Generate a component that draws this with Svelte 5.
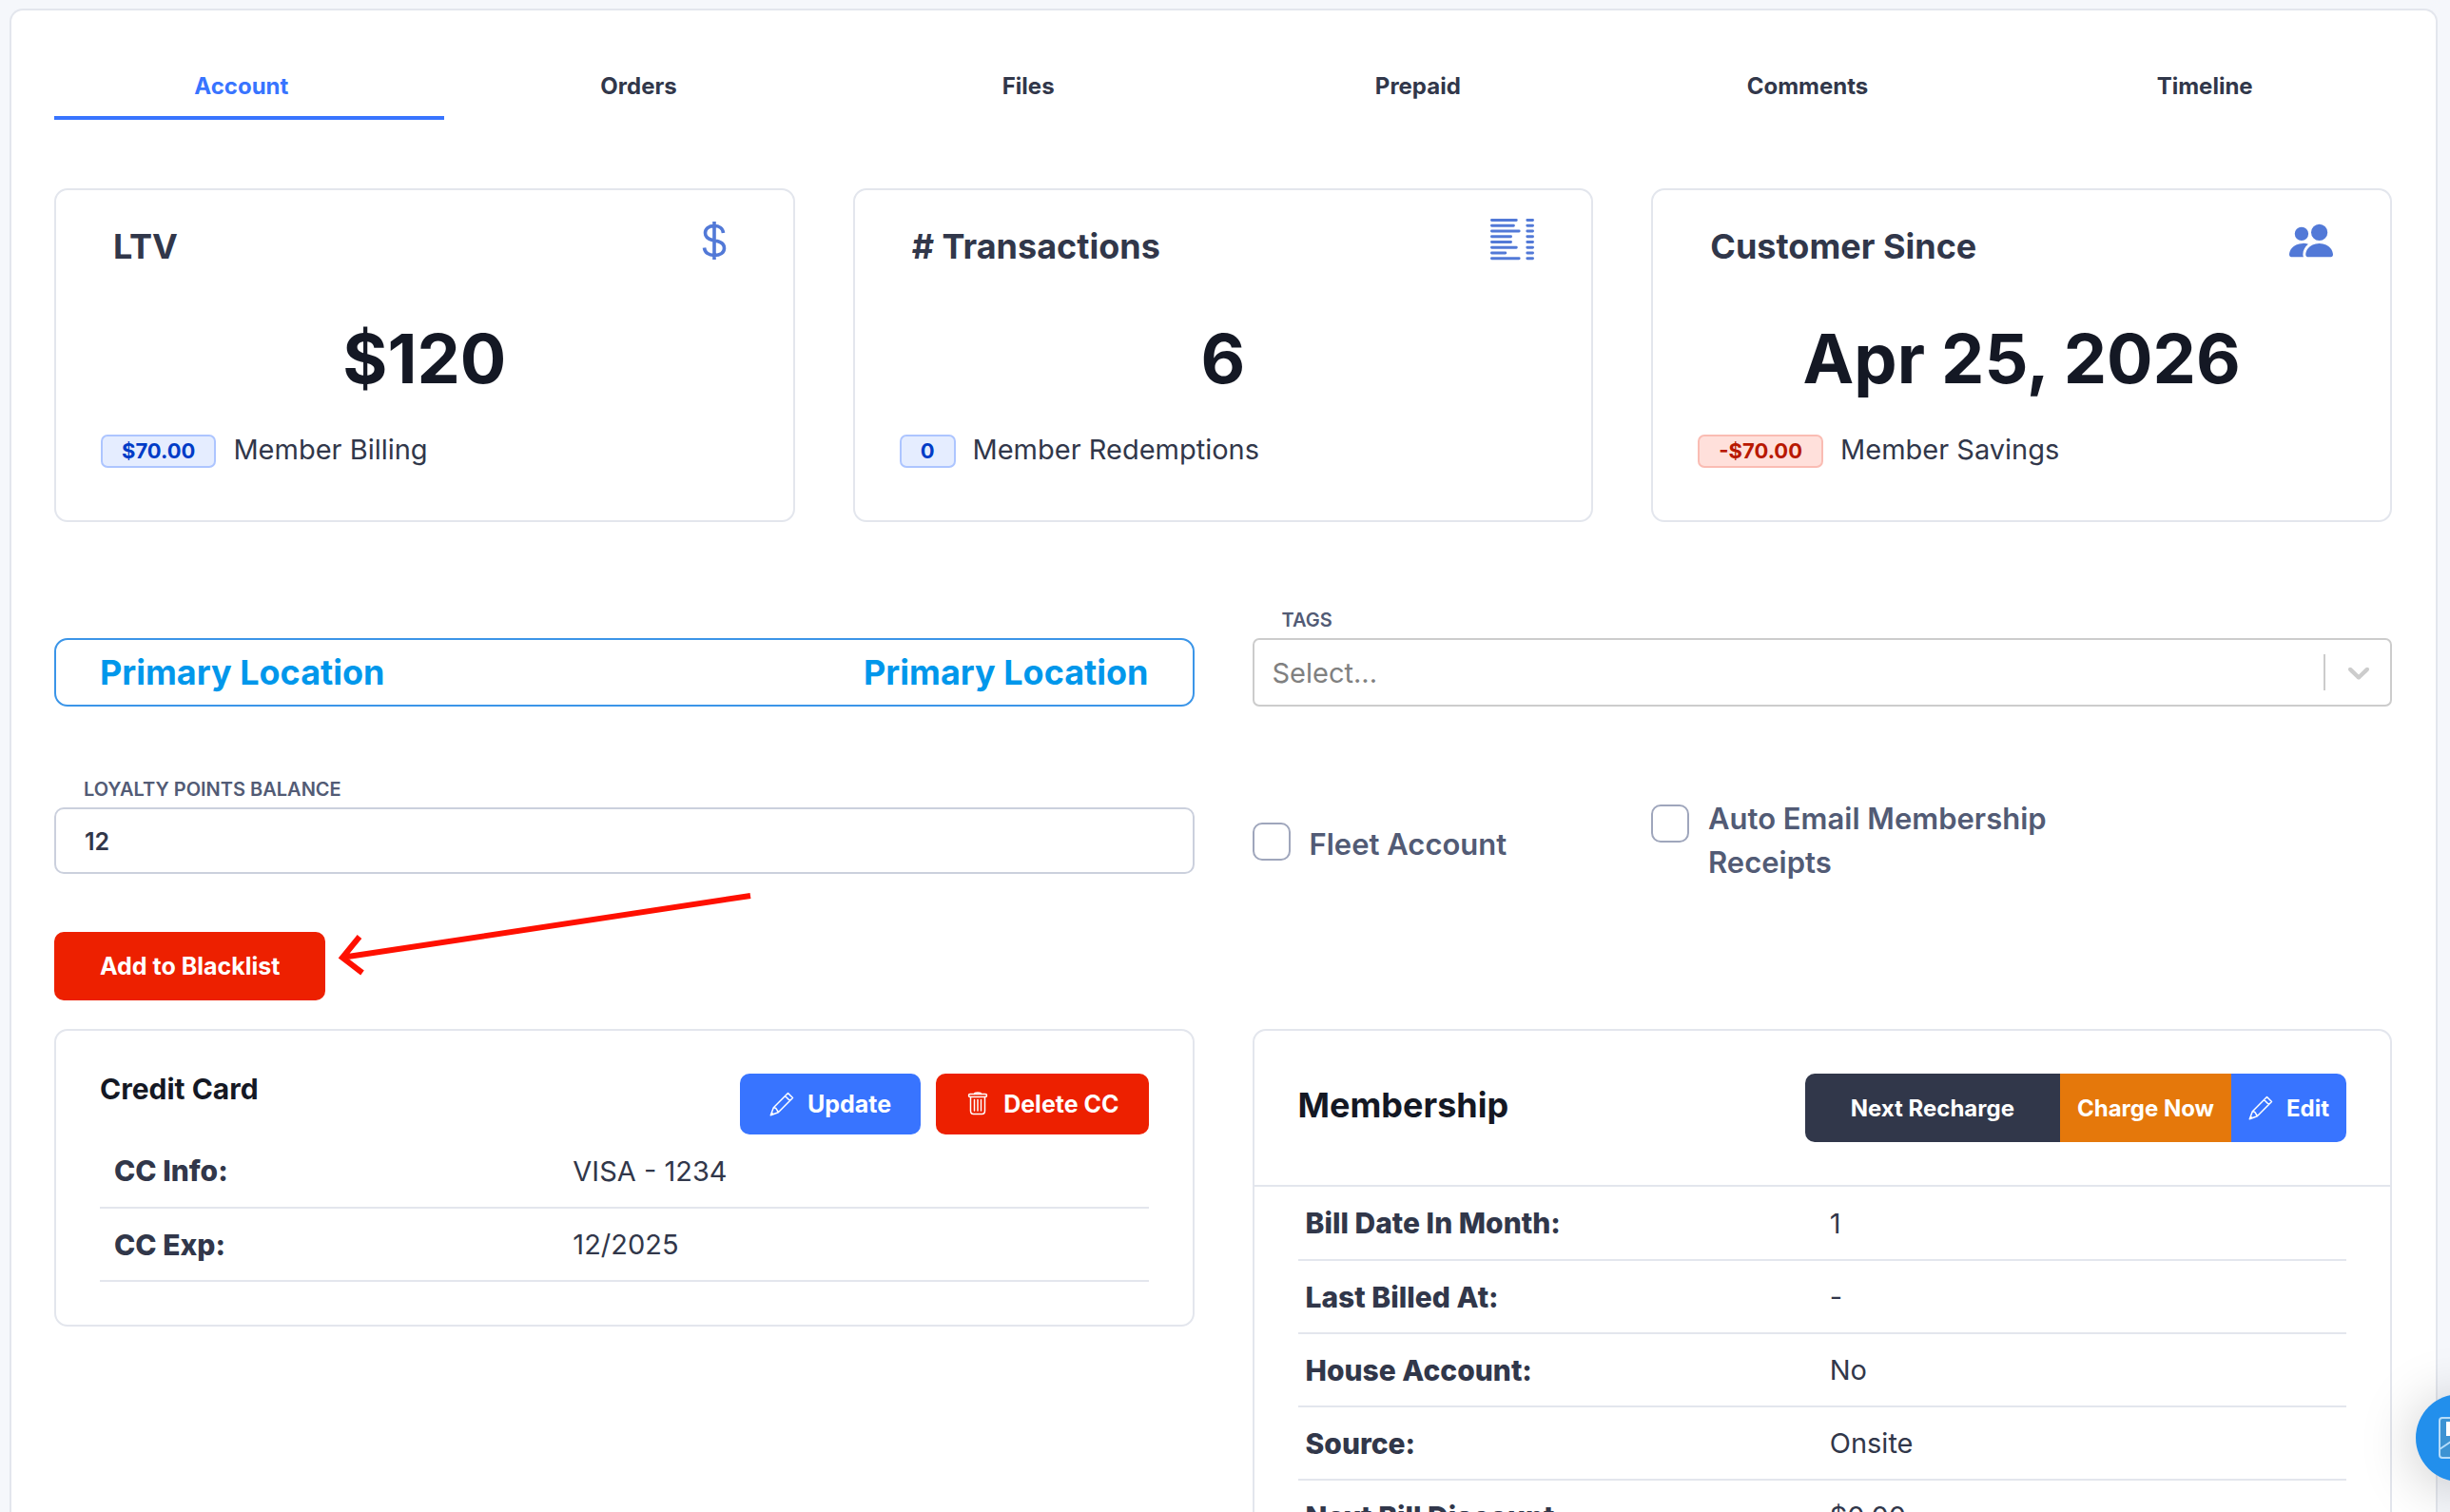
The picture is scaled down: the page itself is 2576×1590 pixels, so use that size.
<script>
  const tabs = ['Account', 'Orders', 'Files', 'Prepaid', 'Comments', 'Timeline'];
  let active = $state('Account');

  const stats = [
    { title: 'LTV', value: '$120', badge: '$70.00', note: 'Member Billing', icon: 'dollar' },
    { title: '# Transactions', value: '6', badge: '0', note: 'Member Redemptions', icon: 'list' },
    { title: 'Customer Since', value: 'Apr 25, 2026', badge: '-$70.00', note: 'Member Savings', icon: 'people', danger: true }
  ];

  const receiptRows = [10, 9, 11, 8, 8, 10, 6, 11];

  const card = [
    ['CC Info:', 'VISA - 1234'],
    ['CC Exp:', '12/2025']
  ];

  const membership = [
    ['Bill Date In Month:', '1'],
    ['Last Billed At:', '-'],
    ['House Account:', 'No'],
    ['Source:', 'Onsite'],
    ['Next Bill Discount:', '$0.00']
  ];

  let points = $state('12');
</script>

{#snippet pencil()}
  <svg class="btn-icon" viewBox="0 0 26 26" aria-hidden="true">
    <path d="M19.5 1.5 24.5 6.500 9.300 21.700 1.300 24.700 4.300 16.700ZM16.500 4.500l5 5M4.300 16.700l2.400.6 1.200 1.900 1.400 2.500M2.300 22l1.700 1.700" />
  </svg>
{/snippet}

<div class="page">
  <main class="panel">
    <nav class="tabs" aria-label="Customer sections">
      {#each tabs as tab}
        <button class="tab" class:active={active === tab} onclick={() => (active = tab)}>{tab}</button>
      {/each}
    </nav>

    <section class="stats">
      {#each stats as s}
        <article class="card stat">
          <header class="stat-head">
            <h2>{s.title}</h2>
            {#if s.icon === 'dollar'}
              <svg class="stat-icon" viewBox="0 0 46 46" aria-hidden="true">
                <path d="M23 3v40M32.500 15c-.5-5-4.500-7.500-9.500-7.500-6 0-9.500 3-9.500 7.500 0 4.400 3 6.300 7.500 7.500l5 1.100c5 1.200 7.500 3.300 7.500 7.400 0 5-4.500 7.500-10.500 7.500-6 0-10-3-10.500-8" fill="none" stroke="currentColor" stroke-width="3.600" />
              </svg>
            {:else if s.icon === 'list'}
              <svg class="stat-icon" viewBox="0 0 16 16" aria-hidden="true">
                {#each receiptRows as w, i}
                  <path d="M.5 {0.500 + i * 2}h{w - 1}M13.500 {0.500 + i * 2}h2" stroke="currentColor" stroke-width="1" stroke-linecap="round" />
                {/each}
              </svg>
            {:else}
              <svg class="stat-icon" viewBox="0 0 16 16" aria-hidden="true">
                <path d="M7 14s-1 0-1-1 1-4 5-4 5 3 5 4-1 1-1 1H7zm4-6a3 3 0 1 0 0-6 3 3 0 0 0 0 6zM5.216 14A2.238 2.238 0 0 1 5 13c0-1.355.68-2.750 1.936-3.720A6.325 6.325 0 0 0 5 9c-4 0-5 3-5 4s1 1 1 1h4.216zM4.500 8a2.500 2.500 0 1 0 0-5 2.500 2.500 0 0 0 0 5z" fill="currentColor" />
              </svg>
            {/if}
          </header>
          <p class="value">{s.value}</p>
          <p class="note"><span class="badge" class:danger={s.danger}>{s.badge}</span>{s.note}</p>
        </article>
      {/each}
    </section>

    <section class="row location-row">
      <div class="location"><span>Primary Location</span><span>Primary Location</span></div>
      <div class="field">
        <label for="tags">Tags</label>
        <div class="select">
          <select id="tags"><option>Select...</option></select>
          <svg viewBox="0 0 20 20" aria-hidden="true">
            <path d="M4.516 7.548c0.436-0.446 1.043-0.481 1.576 0l3.908 3.747 3.908-3.747c0.533-0.481 1.141-0.446 1.574 0 0.436 0.445 0.408 1.197 0 1.615-0.406 0.418-4.695 4.502-4.695 4.502-0.217 0.223-0.502 0.335-0.787 0.335s-0.570-0.112-0.789-0.335c0 0-4.287-4.084-4.695-4.502s-0.436-1.170 0-1.615z" />
          </svg>
        </div>
      </div>
    </section>

    <section class="row points-row">
      <div class="field">
        <label for="points">Loyalty Points Balance</label>
        <input id="points" class="text" type="text" bind:value={points} />
      </div>
      <div class="checks">
        <label class="check low"><input type="checkbox" /><span>Fleet Account</span></label>
        <label class="check high"><input type="checkbox" /><span>Auto Email Membership Receipts</span></label>
      </div>
    </section>

    <div class="blacklist">
      <button class="btn red tall">Add to Blacklist</button>
      <svg class="arrow" viewBox="0 0 440 96" aria-hidden="true">
        <path d="M434 8 4 73M23 51 5 73l21 16" />
      </svg>
    </div>

    <section class="row cards">
      <article class="card cc">
        <header class="cc-head">
          <h3>Credit Card</h3>
          <div class="actions">
            <button class="btn blue">{@render pencil()}Update</button>
            <button class="btn red">
              <svg class="btn-icon" viewBox="0 0 26 26" aria-hidden="true">
                <rect x="3.500" y="2.500" width="19" height="3" rx="1.500" />
                <path d="M9.500 2.500c0-2 7-2 7 0M5.500 5.500V20c0 2.500 1 3.500 3 3.500h9c2 0 3-1 3-3.500V5.500M9.500 8.500v11.500M13 8.500v11.500M16.500 8.500v11.500" />
              </svg>Delete CC
            </button>
          </div>
        </header>
        <table class="cc-table">
          <tbody>
            {#each card as [k, v]}
              <tr><th scope="row">{k}</th><td>{v}</td></tr>
            {/each}
          </tbody>
        </table>
      </article>

      <article class="card membership">
        <header class="m-head">
          <h2>Membership</h2>
          <div class="group">
            <button class="btn dark tall">Next Recharge</button>
            <button class="btn orange tall slim">Charge Now</button>
            <button class="btn blue tall slim">{@render pencil()}Edit</button>
          </div>
        </header>
        <table class="m-table">
          <tbody>
            {#each membership as [k, v]}
              <tr><th scope="row">{k}</th><td>{v}</td></tr>
            {/each}
          </tbody>
        </table>
      </article>
    </section>
  </main>

  <button class="chat" aria-label="Open chat">
    <svg viewBox="0 0 44 44" aria-hidden="true">
      <rect x="1" y="1" width="42" height="42" rx="3" fill="#3d93d3" stroke="#b5dcfa" stroke-width="2" />
      <path d="M8 5h28v15H8z" fill="#fff" />
      <path d="M1 34 22 20l21 14" fill="none" stroke="#b5dcfa" stroke-width="2" />
    </svg>
  </button>
</div>

<style>
  :global(body) {
    margin: 0;
    background: #f5f7fb;
  }

  .page,
  .page * {
    box-sizing: border-box;
  }

  .page {
    height: 100vh;
    overflow: hidden;
    padding: 9px 13px 0 10px;
    background: #f5f7fb;
    color: #31374a;
    font-family: Inter, 'Noto Sans', sans-serif;
    font-size: 29px;
  }

  h2,
  h3,
  p {
    margin: 0;
  }

  button,
  input,
  select {
    font: inherit;
    color: inherit;
  }

  button {
    cursor: pointer;
  }

  .panel {
    min-height: 100%;
    padding: 44px 46px 0 45px;
    border: 2px solid #e3e6ed;
    border-bottom: 0;
    border-radius: 14px 14px 0 0;
    background: #fff;
  }

  .tabs {
    display: grid;
    grid-template-columns: repeat(6, 1fr);
  }

  .tab {
    height: 71px;
    padding: 3px 0 0;
    border: 0;
    border-bottom: 4px solid transparent;
    background: none;
    font-size: 24px;
    font-weight: 700;
  }

  .tab:first-child {
    padding-right: 16px;
  }

  .tab:last-child {
    padding-left: 16px;
  }

  .tab.active {
    border-color: #3874ff;
    color: #3874ff;
  }

  .card {
    border: 2px solid #e3e6ed;
    border-radius: 14px;
    background: #fff;
  }

  .stats {
    display: grid;
    grid-template-columns: repeat(3, 1fr);
    gap: 61px;
    margin-top: 72px;
  }

  .stat {
    padding: 30px 60px 52px;
  }

  .stat-head {
    display: flex;
    justify-content: space-between;
  }

  h2 {
    font-size: 36px;
    font-weight: 700;
    line-height: 58px;
  }

  .stat-icon {
    width: 46px;
    height: 46px;
    color: #5279d7;
  }

  .value {
    margin-top: 45px;
    color: #141824;
    font-size: 72px;
    font-weight: 700;
    line-height: 88px;
    text-align: center;
  }

  .note {
    display: flex;
    align-items: center;
    gap: 18px;
    margin: 30px -13px 0;
    line-height: 44px;
  }

  .badge {
    margin-top: 3px;
    padding: 0 20px;
    border: 2px solid #adc5ff;
    border-radius: 7px;
    background: #e5edff;
    color: #003cc7;
    font-size: 22px;
    font-weight: 700;
    line-height: 31px;
  }

  .badge.danger {
    border-color: #fabcb3;
    background: #ffe0db;
    color: #b81800;
  }

  .row {
    display: grid;
    grid-template-columns: 1fr 1fr;
    gap: 61px;
  }

  .location-row {
    align-items: end;
    margin-top: 91px;
  }

  .location {
    display: flex;
    align-items: center;
    justify-content: space-between;
    height: 72px;
    padding: 0 46px;
    border: 2px solid #3b95e8;
    border-radius: 14px;
    color: #0097eb;
    font-size: 36px;
    font-weight: 700;
  }

  .field label {
    display: block;
    margin-bottom: 7px;
    padding-left: 31px;
    color: #525b75;
    font-size: 20px;
    font-weight: 600;
    line-height: 24px;
    text-transform: uppercase;
  }

  .select {
    display: flex;
    align-items: center;
    position: relative;
  }

  .select select {
    width: 100%;
    height: 72px;
    padding: 0 19px;
    border: 2px solid #ccc;
    border-radius: 7px;
    background: #fff;
    color: #808080;
    appearance: none;
  }

  .select svg {
    position: absolute;
    right: 0;
    width: 72px;
    height: 38px;
    border-left: 2px solid #ccc;
    fill: #ccc;
  }

  .points-row {
    margin-top: 75px;
  }

  .text {
    display: block;
    width: 100%;
    height: 70px;
    padding: 2px 30px 0;
    border: 2px solid #cbd0dd;
    border-radius: 10px;
    background: #fff;
    font-size: 25px;
    font-weight: 600;
  }

  .checks {
    display: grid;
    grid-template-columns: 35% 35%;
    padding-top: 20px;
  }

  .check {
    display: flex;
    gap: 20px;
    color: #525b75;
    font-size: 31px;
    font-weight: 600;
    line-height: 46px;
  }

  .check input {
    flex: none;
    width: 40px;
    height: 40px;
    margin: 0;
    border: 2px solid #9fa6bc;
    border-radius: 10px;
    background: #fff;
    appearance: none;
  }

  .check input:checked {
    background: #3874ff;
  }

  .check.low {
    padding-top: 27px;
  }

  .check.high input {
    margin-top: 8px;
  }

  .blacklist {
    position: relative;
    width: fit-content;
    margin-top: 50px;
  }

  .arrow {
    position: absolute;
    top: -46px;
    left: 298px;
    width: 440px;
    fill: none;
    stroke: #ff1000;
    stroke-width: 6;
    pointer-events: none;
  }

  .btn {
    display: flex;
    align-items: center;
    justify-content: center;
    gap: 14px;
    height: 64px;
    padding: 0 31px;
    border: 0;
    border-radius: 10px;
    color: #fff;
    font-size: 25px;
    font-weight: 700;
    white-space: nowrap;
  }

  .tall {
    height: 72px;
    padding: 0 48px;
  }

  .slim {
    padding: 0 18px;
  }

  .red {
    background: #ed2000;
  }

  .blue {
    background: #3874ff;
  }

  .dark {
    background: #31374a;
  }

  .orange {
    background: #e5780b;
  }

  .btn-icon {
    width: 26px;
    height: 26px;
    fill: none;
    stroke: currentColor;
    stroke-width: 1.500;
    stroke-linejoin: round;
    stroke-linecap: round;
  }

  .cards {
    align-items: start;
    margin-top: 30px;
  }

  .cc {
    padding: 45px 46px;
  }

  .cc-head,
  .m-head {
    display: flex;
    justify-content: space-between;
  }

  .cc h3,
  .membership h2 {
    color: #141824;
  }

  h3 {
    font-size: 30px;
    font-weight: 700;
    line-height: 32px;
  }

  .actions {
    display: flex;
    gap: 16px;
  }

  table {
    width: 100%;
    border-collapse: collapse;
    table-layout: fixed;
  }

  th,
  td {
    height: 77px;
    padding: 0 8px;
    border-bottom: 2px solid #e3e6ed;
    text-align: left;
    font-weight: 400;
  }

  th {
    width: 50%;
    font-size: 30px;
    font-weight: 800;
  }

  .cc-table th,
  .cc-table td {
    padding: 0 15px;
  }

  .cc-table th {
    width: calc(100% * 7 / 16);
  }

  .m-head {
    padding: 45px 46px;
    border-bottom: 2px solid #e3e6ed;
  }

  .m-head h2 {
    line-height: 66px;
  }

  .m-table {
    width: calc(100% - 92px);
    margin: 0 46px;
  }

  .group {
    display: flex;
    overflow: hidden;
    border-radius: 10px;
  }

  .group .btn {
    border-radius: 0;
    font-size: 24px;
  }

  .chat {
    position: fixed;
    right: -56px;
    bottom: 32px;
    display: grid;
    place-items: center;
    width: 92px;
    height: 92px;
    padding: 0;
    border: 0;
    border-radius: 50%;
    background: #228fec;
    box-shadow: 0 6px 60px rgb(0 0 0 / 22%);
  }

  .chat svg {
    width: 44px;
    height: 44px;
  }
</style>
